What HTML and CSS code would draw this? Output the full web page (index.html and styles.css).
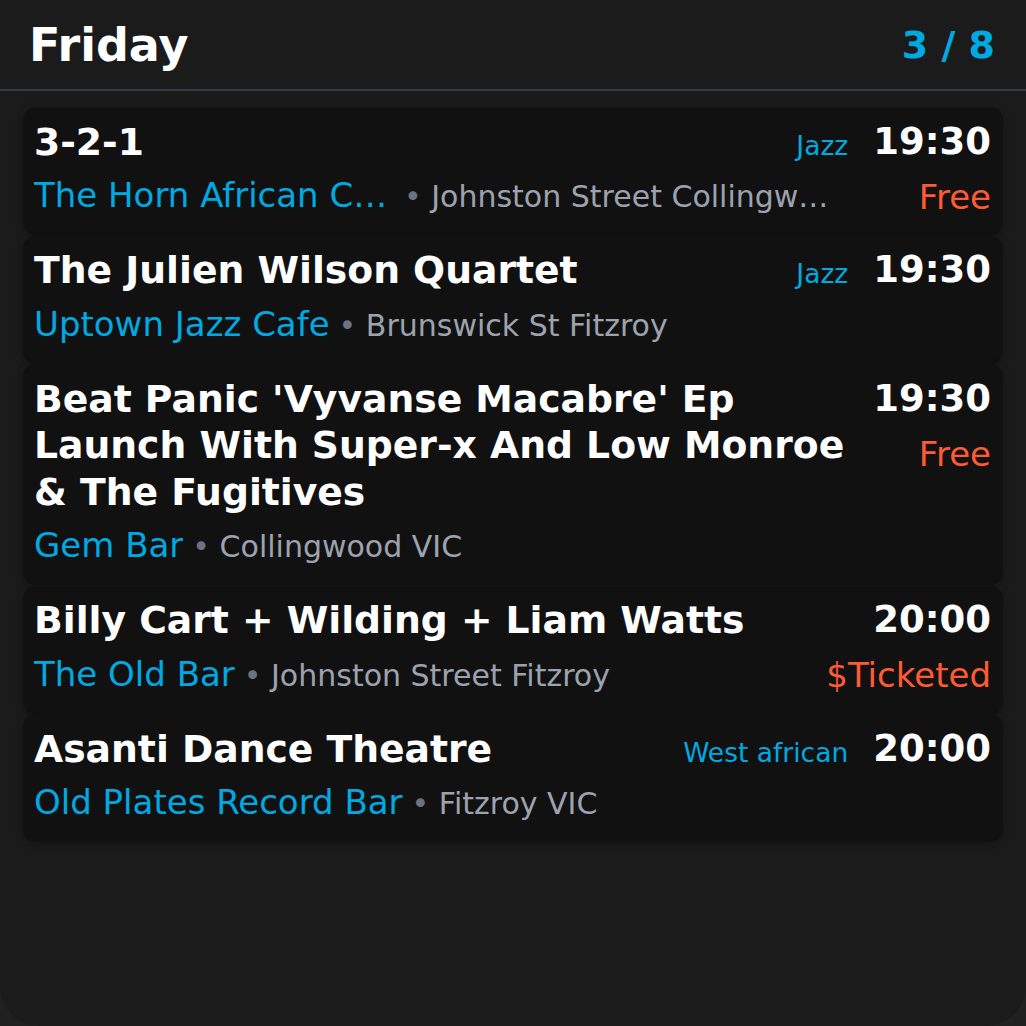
FILE: index.html
```html
<!DOCTYPE html>
<html lang="en">
<head>
<meta charset="utf-8">
<title>Friday</title>
<link rel="stylesheet" href="styles.css">
</head>
<body>
<div class="app">
  <header class="topbar">
    <h1 class="day">Friday</h1>
    <div class="count">3 / 8</div>
  </header>
  <main class="list">
    <article class="card">
      <div class="info">
        <div class="title-row"><h2 class="title">3-2-1</h2><span class="genre">Jazz</span></div>
        <div class="venue-row"><span class="venue venue-cut">The Horn African Cafe &amp; Restaurant</span><span class="addr"><span class="dot">•</span> Johnston Street Collingwood VIC</span></div>
      </div>
      <div class="side"><div class="time">19:30</div><div class="price">Free</div></div>
    </article>
    <article class="card">
      <div class="info">
        <div class="title-row"><h2 class="title">The Julien Wilson Quartet</h2><span class="genre">Jazz</span></div>
        <div class="venue-row"><span class="venue">Uptown Jazz Cafe</span><span class="addr"><span class="dot">•</span> Brunswick St Fitzroy</span></div>
      </div>
      <div class="side"><div class="time">19:30</div></div>
    </article>
    <article class="card">
      <div class="info">
        <div class="title-row"><h2 class="title">Beat Panic 'Vyvanse Macabre' Ep Launch With Super-x And Low Monroe &amp; The Fugitives</h2></div>
        <div class="venue-row"><span class="venue">Gem Bar</span><span class="addr"><span class="dot">•</span> Collingwood VIC</span></div>
      </div>
      <div class="side"><div class="time">19:30</div><div class="price">Free</div></div>
    </article>
    <article class="card">
      <div class="info">
        <div class="title-row"><h2 class="title">Billy Cart + Wilding + Liam Watts</h2></div>
        <div class="venue-row"><span class="venue">The Old Bar</span><span class="addr"><span class="dot">•</span> Johnston Street Fitzroy</span></div>
      </div>
      <div class="side"><div class="time">20:00</div><div class="price">$Ticketed</div></div>
    </article>
    <article class="card">
      <div class="info">
        <div class="title-row"><h2 class="title">Asanti Dance Theatre</h2><span class="genre">West african</span></div>
        <div class="venue-row"><span class="venue">Old Plates Record Bar</span><span class="addr"><span class="dot">•</span> Fitzroy VIC</span></div>
      </div>
      <div class="side"><div class="time">20:00</div></div>
    </article>
  </main>
</div>
</body>
</html>
```
FILE: styles.css
```css
html, body {
  margin: 0;
  padding: 0;
  background: #202020;
  font-family: "DejaVu Sans", Verdana, sans-serif;
  color: #fff;
}

.app {
  width: 1026px;
  height: 1026px;
  box-sizing: border-box;
  background: #1b1b1b;
  border-radius: 0 0 40px 40px;
  overflow: hidden;
}

.topbar {
  height: 91px;
  box-sizing: border-box;
  display: flex;
  align-items: center;
  justify-content: space-between;
  padding: 0 31px 0 29px;
  border-bottom: 2px solid #343a45;
}

.day {
  margin: 0;
  font-size: 46px;
  font-weight: bold;
  line-height: 1;
}

.count {
  font-size: 38px;
  font-weight: bold;
  color: #00a9e0;
  line-height: 1;
}

.list {
  display: flex;
  flex-direction: column;
  gap: 0.5px;
  padding: 16px 23px 0;
}

.card {
  display: flex;
  gap: 22px;
  background: #111111;
  border-radius: 13px;
  padding: 11.5px 12px 18px 11px;
  box-shadow: 0 2px 8px rgba(0, 0, 0, 0.25);
}

.info {
  flex: 1;
  min-width: 0;
}

.title-row {
  display: flex;
  align-items: baseline;
  justify-content: space-between;
  gap: 20px;
}

.title {
  margin: 0;
  font-size: 37.7px;
  font-weight: bold;
  line-height: 46.5px;
}

.genre {
  flex: none;
  margin-right: 3px;
  font-size: 26.5px;
  line-height: 30px;
  color: #00a9e0;
}

.venue-row {
  display: flex;
  align-items: baseline;
  height: 44px;
  margin-top: 8px;
  padding-right: 12px;
  line-height: 44px;
  white-space: nowrap;
}

.venue {
  flex: none;
  font-size: 34px;
  color: #00a9e0;
  overflow: hidden;
  text-overflow: ellipsis;
}

.venue-cut {
  flex: 0 0 auto;
  max-width: 366px;
}

.addr {
  flex: 0 1 auto;
  min-width: 0;
  margin-left: 9px;
  font-size: 30px;
  color: #9ca3af;
  overflow: hidden;
  text-overflow: ellipsis;
}

.venue-cut + .addr {
  margin-left: 4px;
}

.dot {
  color: #6b7280;
}

.side {
  flex: none;
  display: flex;
  flex-direction: column;
  align-items: flex-end;
}

.time {
  font-size: 37px;
  font-weight: bold;
  line-height: 46.5px;
}

.price {
  margin-top: 12.5px;
  font-size: 34px;
  line-height: 38px;
  color: #ff5a36;
}
```
